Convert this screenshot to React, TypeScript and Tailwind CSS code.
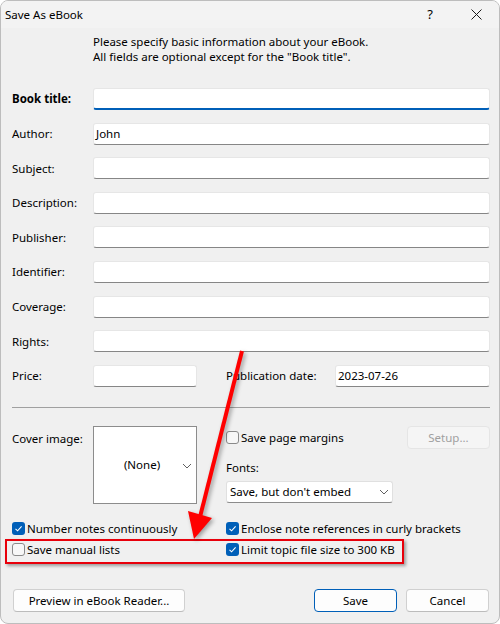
import { ReactNode } from 'react';

const font = { fontFamily: '"Noto Sans", "Open Sans", sans-serif' };

function TextBox({ value = '', focused = false, className = '' }: { value?: string; focused?: boolean; className?: string }) {
  return (
    <div
      className={`h-[22px] bg-white border border-[#e6e6e6] rounded-[3px] flex items-center px-[2px] ${
        focused ? 'border-b-2 border-b-[#005fb8]' : 'border-b-[#868686]'
      } ${className}`}
    >
      <span className="text-[11.5px] text-black">{value}</span>
    </div>
  );
}

function Check({ checked, label }: { checked: boolean; label: string }) {
  return (
    <div className="flex items-center gap-[2px] h-[16px]">
      {checked ? (
        <span className="w-[13px] h-[13px] rounded-[3px] bg-[#005fb8] flex items-center justify-center">
          <svg width="9" height="9" viewBox="0 0 9 9">
            <path d="M1.5 4.8 L3.6 6.8 L7.6 2.4" fill="none" stroke="white" strokeWidth="1.1" />
          </svg>
        </span>
      ) : (
        <span className="w-[13px] h-[13px] rounded-[3px] border border-[#8a8a8a] bg-[#f7f7f7]" />
      )}
      <span className="text-[11.5px] text-black">{label}</span>
    </div>
  );
}

function Chevron() {
  return (
    <svg width="10" height="6" viewBox="0 0 10 6">
      <path d="M1 1 L5 5 L9 1" fill="none" stroke="#606060" strokeWidth="1" />
    </svg>
  );
}

function Row({ label, bold = false, children }: { label: string; bold?: boolean; children: ReactNode }) {
  return (
    <div className="flex items-center h-[22px]">
      <span className={`w-[81px] text-[11.5px] text-black ${bold ? 'font-bold' : ''}`}>{label}</span>
      <div className="flex-1">{children}</div>
    </div>
  );
}

function Button({ children, primary = false, disabled = false, className = '' }: { children: ReactNode; primary?: boolean; disabled?: boolean; className?: string }) {
  return (
    <div
      className={`h-[23px] rounded-[4px] flex items-center justify-center text-[11.5px] ${
        disabled
          ? 'bg-[#f5f5f5] border border-[#e5e5e5] text-[#a0a0a0]'
          : primary
          ? 'bg-[#fdfdfd] border border-[#005fb8] text-black'
          : 'bg-[#fdfdfd] border border-[#d0d0d0] border-b-[#bcbcbc] text-black'
      } ${className}`}
    >
      {children}
    </div>
  );
}

export default function App() {
  return (
    <div style={font} className="relative w-[500px] h-[624px] bg-[#f0f0f0] border border-[#bdbdbd] rounded-[8px] overflow-hidden flex flex-col">
      {/* title bar */}
      <div className="h-[27px] flex items-center pl-[4px] bg-[#f3f3f3]">
        <span className="text-[11.5px] text-black flex-1">Save As eBook</span>
        <span className="text-[13px] text-black w-[46px] text-center">?</span>
        <span className="w-[46px] flex justify-center">
          <svg width="11" height="11" viewBox="0 0 11 11">
            <path d="M0.5 0.5 L10.5 10.5 M10.5 0.5 L0.5 10.5" stroke="#1a1a1a" strokeWidth="1" />
          </svg>
        </span>
      </div>

      <div className="flex-1 pl-[11px] pr-[9px] flex flex-col">
        <div className="pl-[81px] pt-[6px] text-[11.5px] leading-[15px] text-black">
          <p>Please specify basic information about your eBook.</p>
          <p>All fields are optional except for the "Book title".</p>
        </div>

        <div className="mt-[24px] flex flex-col gap-[12.6px]">
          <Row label="Book title:" bold>
            <TextBox focused />
          </Row>
          <Row label="Author:">
            <TextBox value="John" />
          </Row>
          <Row label="Subject:">
            <TextBox />
          </Row>
          <Row label="Description:">
            <TextBox />
          </Row>
          <Row label="Publisher:">
            <TextBox />
          </Row>
          <Row label="Identifier:">
            <TextBox />
          </Row>
          <Row label="Coverage:">
            <TextBox />
          </Row>
          <Row label="Rights:">
            <TextBox />
          </Row>
          <div className="flex items-center h-[22px]">
            <span className="w-[81px] text-[11.5px] text-black">Price:</span>
            <TextBox className="w-[104px]" />
            <span className="ml-[29px] w-[109px] text-[11.5px] text-black">Publication date:</span>
            <TextBox value="2023-07-26" className="flex-1" />
          </div>
        </div>

        <div className="mt-[20px] h-px bg-[#a0a0a0]" />

        <div className="mt-[18px] flex">
          <span className="w-[81px] text-[11.5px] text-black pt-[4px]">Cover image:</span>
          <div className="w-[104px] h-[78px] bg-white border border-[#8c8c8c] flex items-center relative">
            <span className="flex-1 text-center text-[11.5px] text-black pr-[6px]">(None)</span>
            <span className="absolute right-[4px] top-[36px]">
              <Chevron />
            </span>
          </div>
          <div className="ml-[29px] flex-1 flex flex-col">
            <div className="flex items-start justify-between">
              <div className="pt-[4px]">
                <Check checked={false} label="Save page margins" />
              </div>
              <Button disabled className="w-[83px]">Setup...</Button>
            </div>
            <span className="mt-[10px] text-[11.5px] text-black">Fonts:</span>
            <div className="mt-[5px] w-[167px] h-[22px] bg-white border border-[#e0e0e0] border-b-[#8c8c8c] rounded-[3px] flex items-center px-[3px]">
              <span className="flex-1 text-[11.5px] text-black">Save, but don't embed</span>
              <Chevron />
            </div>
          </div>
        </div>

        <div className="mt-[17px] grid grid-cols-[214px_1fr] gap-y-[5px]">
          <Check checked label="Number notes continuously" />
          <Check checked label="Enclose note references in curly brackets" />
          <Check checked={false} label="Save manual lists" />
          <Check checked label="Limit topic file size to 300 KB" />
        </div>

        <div className="mt-[31px] flex items-center">
          <Button className="w-[172px] ml-[1px]">Preview in eBook Reader...</Button>
          <div className="flex-1" />
          <Button primary className="w-[83px]">Save</Button>
          <Button className="w-[83px] ml-[9px] mr-[1px]">Cancel</Button>
        </div>
      </div>

      {/* annotation overlays */}
      <div className="absolute left-[4px] top-[538px] w-[399px] h-[25px] border-2 border-[#e8000b] shadow-[2px_2px_3px_rgba(0,0,0,0.35)]" />
      <svg className="absolute left-0 top-0 pointer-events-none" width="500" height="624" style={{ filter: 'drop-shadow(2px 2px 2px rgba(0,0,0,0.35))' }}>
        <line x1="241" y1="350" x2="199" y2="516" stroke="#ff0000" strokeWidth="4" />
        <polygon points="187,510 211,517 193,538" fill="#ff0000" />
      </svg>
    </div>
  );
}
